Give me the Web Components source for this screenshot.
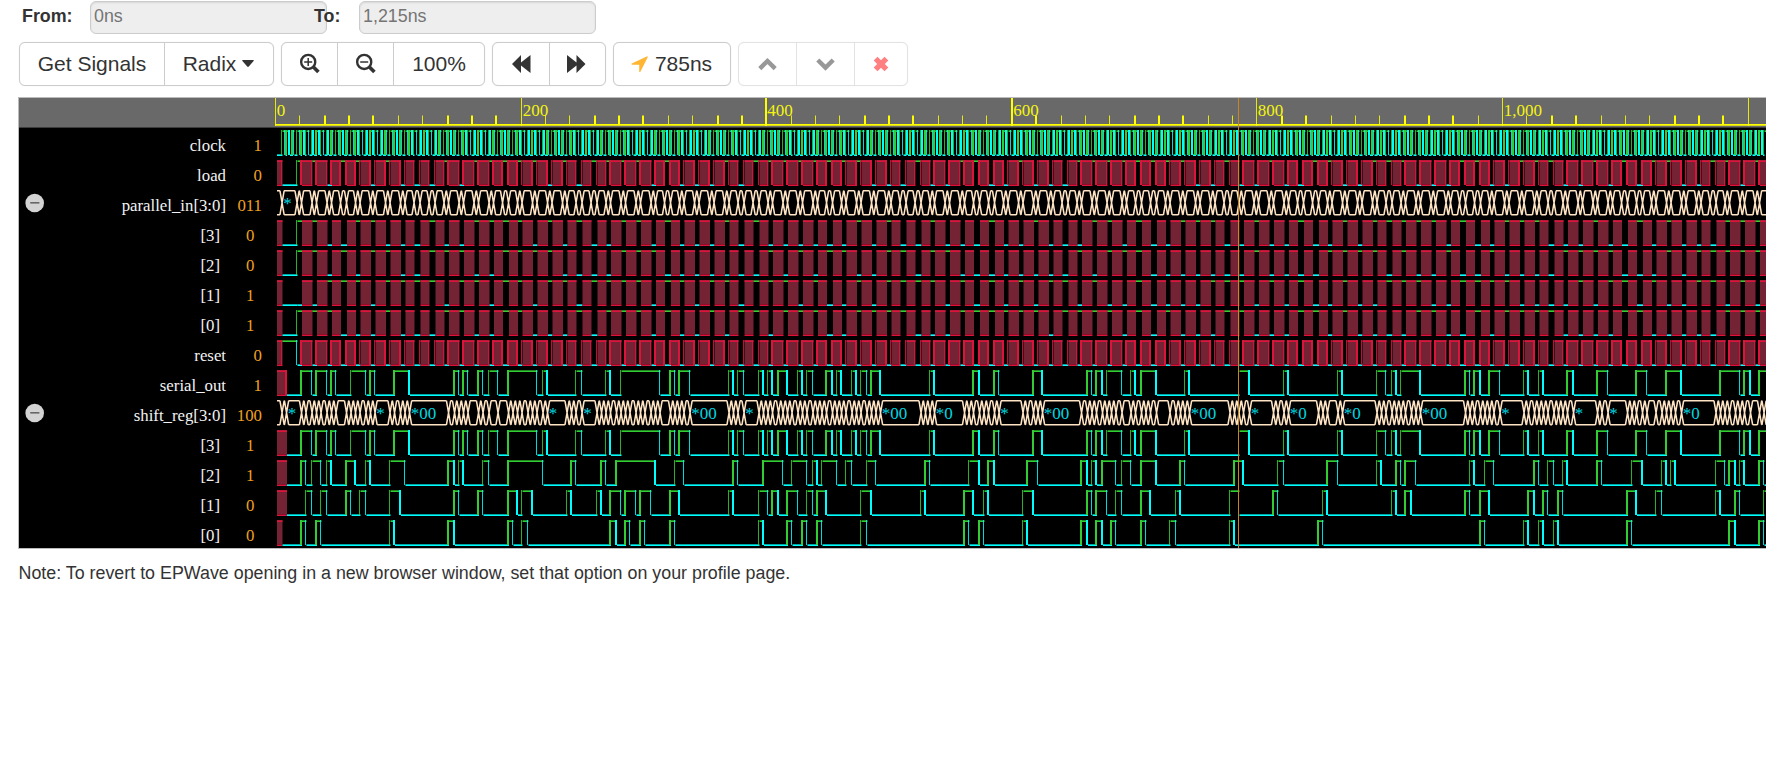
<!DOCTYPE html>
<html lang="en">
<head>
<meta charset="utf-8">
<title>EPWave</title>
<style>
body { margin: 0; background: #fff; font-family: "Liberation Sans", Arial, sans-serif; color: #333; overflow: hidden; }
</style>
</head>
<body>
<ep-wave></ep-wave>
<script>
const define = (name, html, init) => customElements.define(name, class extends HTMLElement {
  connectedCallback() {
    if (this.shadowRoot) return;
    const t = document.createElement('template');
    t.innerHTML = html;
    this.attachShadow({ mode: 'open' }).append(t.content.cloneNode(true));
    if (init) init(this, this.shadowRoot);
  }
});

/* ---------- time base: whole wave units, 1.5 px each ---------- */
const UNIT = 1.5, PER_NS = 0.8181, END = 1230, PLOT = 1491;
const unit = t => Math.round(t * PER_NS);
const px = t => unit(t) * UNIT;
const HI = 2, LO = 26;
const GREEN = '#32cd32', CYAN = '#00ffff', RED = '#dc143c', BUS = '#ffe4c4';

/* ---------- recorded data ---------- */
/* shift register edges: [segment origin, thirds of a pixel...] */
const edges = segs => segs.flatMap(([o, ...zs]) => zs.map(z => 1 + 4 * Math.round((o + z / 3 - 276.73) / 4.908)));
const S3 = edges([
  [270,92,124,137,170,182,196,241,286,299,313,372,416,552,566,579,593,623,637,655,683,713,800,817,830,917,935],
  [580,77,90,121,239,269,284,296,328,446,459,472,490,536,549,562,575,593,621,653,666,680,698,738,756,769,783,813,828,842,860,872,901],
  [890,118,132,253,266,311,326,428,457,590,605,617,635,649,695,722,736,752,798,883,897],
  [1200,116,147,250,264,412,426,530,557,574,588,601,661,794,809,821,840,866,899],
  [1480,130,144,175,189,260,279,350,382,468,500,557,604,718,778,790,809,836]]);
const S2 = edges([
  [270,92,106,124,152,169,182,227,256,286,299,358,404,534,552,565,578,637,655,713,818,902,917],
  [580,62,76,107,225,283,310,459,472,548,608,634,680,698,711,724,770,797,815,860,886],
  [890,104,118,235,267,293,312,415,442,577,590,604,617,635,676,694,722,752,798,870,883],
  [1200,101,129,232,250,380,413,530,543,587,602,614,647,808,822,853,880],
  [1480,161,175,202,220,247,260,350,364,455,486,545,558,571,584,706,733,746,764,778,792,836,850]]);
const S1 = edges([
  [270,106,124,152,169,227,241,268,286,358,389,552,566,623,637,713,740,754,786,889,902],
  [580,49,62,90,121,134,166,179,211,269,297,446,459,536,562,575,593,620,653,680,698,710,738,842,873],
  [890,91,104,221,254,280,294,397,429,590,605,617,649,676,694,752,780,857,870],
  [1200,88,116,218,232,367,380,574,588,614,633,794,809,840,867],
  [1480,143,161,188,202,234,247,440,467,526,544,706,720,764,778,850]]);
const S0 = edges([
  [270,92,106,137,152,358,372,534,552,713,727,754,772],
  [580,90,108,134,148,179,193,269,283,536,549,620,634,665,679,710,725,842,858],
  [890,221,235,267,280,397,415,577,590,617,635,662,676,752,766,838,856],
  [1200,88,102,353,367,839,854],
  [1480,130,144,175,189,220,234,440,454,746,764,836,850]]);

/* state of the register [3..0] at a time, and the load strobes that explain it */
const stateAt = t => [S3, S2, S1, S0].map(list => list.filter(e => e <= t).length % 2);
const loadedAt = k => {
  const now = stateAt(34 + 12 * k), [, b, c, d] = stateAt(30 + 12 * k);
  return String(now) !== String([b, c, d, 0]) ? now : null;
};
const TAIL = 65;
const tail = (row, head, idle) => [...head + idle].map((bit, k) => {
  if (k < TAIL) return bit;
  const s = loadedAt(k);
  return row < 0 ? (s ? 1 : 0) : s ? s[row] : bit;
});

const toggles = (xEnd, list) => [[0, 'x'], [xEnd, 0], ...list.map((t, i) => [t, i % 2 ? 0 : 1])];
const sampled = (first, bits) => {
  const out = [[0, 'x'], [5, first[0]], [17, first[1]]];
  for (let k = 0; 21 + 12 * k < END; k++) out.push([21 + 12 * k, 'x'], [29 + 12 * k, +(bits[k] || 0)]);
  return out;
};
const clock = [[0, 0]];
for (let t = 5; t < END; t += 4) clock.push([t, 1], [t + 2, 0]);
const sampleTimes = [5, 17];
for (let t = 21; t < END; t += 12) sampleTimes.push(t, t + 8);

const SIGNALS = [
  { name: 'clock', value: '1', wave: clock },
  { name: 'load', value: '0', frame: 1, wave: sampled([0, 1], tail(-1, '10110100010111110101111010001011111111000100110010001111111100100', '0'.repeat(36))) },
  { name: 'parallel_in[3:0]', value: '011', bus: sampleTimes },
  { name: '[3]', value: '0', child: 1, wave: sampled([0, 1], tail(0, '10011000100111101010011010001010000001010010001001000110100111001', '001101001011010011010010110100101011')) },
  { name: '[2]', value: '0', child: 1, wave: sampled([0, 1], tail(1, '10101100111001111000011100000001010110011011000000001011100000001', '100101101000110100101101001101001010')) },
  { name: '[1]', value: '1', child: 1, wave: sampled([0, 0], tail(2, '01110111101101101101111011011011101001011110101010110100100001110', '101001011010010110100101101001011010')) },
  { name: '[0]', value: '1', child: 1, wave: sampled([0, 1], tail(3, '11000100011001100010111010010110111001111000111111011110101000110', '101101001011010011010010110100101100')) },
  { name: 'reset', value: '0', frame: 1, wave: sampled([1, 0], '') },
  { name: 'serial_out', value: '1', frame: 1, wave: toggles(9, S3) },
  { name: 'shift_reg[3:0]', value: '100', bus: [...new Set([5, 9, ...S3, ...S2, ...S1, ...S0])].sort((a, b) => a - b) },
  { name: '[3]', value: '1', child: 1, wave: toggles(9, S3) },
  { name: '[2]', value: '1', child: 1, wave: toggles(9, S2) },
  { name: '[1]', value: '0', child: 1, wave: toggles(9, S1) },
  { name: '[0]', value: '0', child: 1, wave: toggles(5, S0) }
];

/* ---------- drawing ---------- */
const rect = (x, y, w, h, c, o = 1) => `<rect x="${x}" y="${y}" width="${w}" height="${h}" fill="${c}"${o < 1 ? ` opacity="${o}"` : ''}/>`;
/* an even unit lands on one pixel, an odd one straddles two */
const vline = (n, y, h, c) => n % 2 ? rect(n * UNIT - .5, y, 2, h, c) : rect(n * UNIT, y, 1, h, c, .85);
const hline = (x, y, w, c) => rect(x, y, w, 1, c) + rect(x, y - 1, w, 1, c, .65);

function drawBits(wave, frame) {
  let h = '', v = '';
  wave.forEach(([t, val], i) => {
    const n = unit(t), next = wave[i + 1] ? unit(wave[i + 1][0]) : 1000;
    const x = i ? n * UNIT + 1.5 : 2, w = next * UNIT + 1.5 - x;
    if (val === 'x') {
      h += rect(x, HI, w, LO - HI, '#742335') + hline(x, HI + 1, w, RED) + hline(x, LO + 1, w, RED);
      if (i && frame) v += vline(n, HI, LO - HI + 1, RED);
    } else {
      h += hline(x, val ? HI + 1 : LO + 1, w, val ? GREEN : CYAN);
      const prev = i ? wave[i - 1][1] : val;
      if (prev === 'x') { if (frame) v += vline(n, HI, LO - HI + 1, RED); }
      else if (prev !== val) v += vline(n, HI, LO - HI + 1, val ? GREEN : CYAN);
    }
  });
  return h + v;
}
function drawBus(times) {
  const top = HI + .75, bot = LO + .75;
  let d = '', text = '', from = 2;
  [...times, END].forEach((t, i) => {
    const c = px(t) + .75, a = c - 1.8, b = c + 2.4;
    if (a > from) d += `M${from} ${top}H${a}M${from} ${bot}H${a}`;
    d += `M${a} ${top}L${b} ${bot}M${a} ${bot}L${b} ${top}`;
    from = b;
    const len = i + 1 < times.length ? unit(times[i + 1]) - unit(t) : 0;
    if (len >= 10) text += `<text x="${c + 1.5}" y="20.8">${len >= 25 ? '*00' : len >= 19 ? '*0' : '*'}</text>`;
  });
  return `<path d="${d}" fill="none" stroke="${BUS}" stroke-width="1.5"/>${text}`;
}

define('wave-trace', `<style>
  :host { display: block; height: 30px; overflow: hidden; }
  svg { display: block; }
  text { font: 17px "Liberation Serif", serif; fill: #00d8e0; }
</style><div></div>`, (el, root) => {
  const s = SIGNALS[el.getAttribute('index')];
  root.querySelector('div').innerHTML = `<svg width="${PLOT}" height="30">${s.bus ? drawBus(s.bus) : drawBits(s.wave, s.frame)}</svg>`;
});

define('signal-row', `<style>
  :host { display: grid; grid-template-columns: 38px 169px 36px 13px 1fr; height: 30px; align-items: center; font: 16.8px/30px "Liberation Serif", serif; }
  .name { color: #f2f2f2; text-align: right; white-space: nowrap; padding-top: 6px; height: 24px; line-height: 24px; }
  .value { color: #f0a020; text-align: right; padding-top: 6px; height: 24px; line-height: 24px; }
  :host([child]) .name { padding-right: 6px; }
  :host([child]) .value { padding-right: 7.5px; }
  svg { display: block; margin: 0 0 1px 6px; }
</style>
<span class="fold"></span><span class="name"></span><span class="value"></span><span></span><div class="plot"></div>`, (el, root) => {
  const i = el.getAttribute('index'), s = SIGNALS[i];
  root.querySelector('.name').textContent = s.name;
  root.querySelector('.value').textContent = s.value;
  if (s.bus) root.querySelector('.fold').innerHTML = '<svg width="20" height="20"><circle cx="9.7" cy="10" r="9.3" fill="#d3d3d3"/><rect x="5.2" y="9" width="9.2" height="1.6" fill="#666"/></svg>';
  root.querySelector('.plot').innerHTML = `<wave-trace index="${i}"></wave-trace>`;
});

define('time-ruler', `<style>
  :host { display: block; height: 30px; background: #696969; box-sizing: border-box; border-bottom: 1px solid #3c3c3c; padding-left: 256px; }
  svg { display: block; }
  text { font: 17px "Liberation Serif", serif; fill: #f4f410; }
</style><div></div>`, (el, root) => {
  let s = '';
  for (let t = 0; t <= 1200; t += 20) {
    const major = t % 200 === 0;
    s += vline(unit(t), major ? 0 : 17.5, major ? 28 : 9, '#ff0');
    if (major && t < 1200) s += `<text x="${px(t) + 1.8}" y="18">${t.toLocaleString('en-US')}</text>`;
  }
  root.querySelector('div').innerHTML = `<svg width="${PLOT}" height="29">${s}${rect(0, 26, PLOT, 1, '#ff0')}${rect(0, 27, PLOT, 1, '#ff0', .75)}</svg>`;
});

define('wave-viewer', `<style>
  :host { display: block; position: relative; width: 1747px; background: #000; border: solid #bbb; border-width: 1px 0 1px 1px; height: 450px; overflow: hidden; }
  .cursor { position: absolute; left: 1219px; top: 0; bottom: 0; width: 1px; background: #c8861e; }
</style><time-ruler></time-ruler>
<div class="rows">${SIGNALS.map((s, i) => `<signal-row index="${i}"${s.child ? ' child' : ''}></signal-row>`).join('')}</div>
<div class="cursor"></div>`);

define('time-range', `<style>
  :host { display: flex; height: 34px; font-size: 17.85px; padding-left: 22px; }
  label { font-weight: bold; width: 68px; line-height: 33px; position: relative; }
  label.to { width: 45px; margin-left: -13px; }
  .field { box-sizing: border-box; width: 237px; height: 33px; margin-top: 1px; padding-left: 3px; line-height: 29px; color: #757575; background: #eee; border: 1px solid #ccc; border-radius: 6px; box-shadow: inset 0 1px 2px rgba(0,0,0,.1); }
</style>
<label>From:</label><div class="field">0ns</div><label class="to">To:</label><div class="field">1,215ns</div>`);

define('tool-button', `<style>
  :host { display: flex; align-items: center; justify-content: center; box-sizing: border-box; height: 100%; padding-bottom: 1px; border-left: 1px solid #ccc; white-space: nowrap; }
  :host(:first-child) { border-left: 0; }
</style><slot></slot>`);

define('button-group', `<style>
  :host { display: flex; box-sizing: border-box; height: 44px; border: 1px solid #ccc; border-radius: 6px; background: #fff; box-shadow: 0 0 1px #ddd; }
  :host([disabled]) { opacity: .55; }
</style><slot></slot>`);

define('tool-bar', `<style>
  :host { display: flex; gap: 7px; padding: 8px 0 0 19px; height: 55px; box-sizing: border-box; font-size: 21px; }
  svg { display: block; overflow: visible; }
  .glass { fill: none; stroke: #333; }
</style>
<button-group><tool-button style="width:144px">Get Signals</tool-button><tool-button style="width:109px">Radix<svg width="12" height="8" style="margin:0 1px 0 6px"><path d="M1 0H11Q12.5 0 11.6 1L6.8 6.6Q6 7.3 5.2 6.6L.4 1Q-.5 0 1 0Z" fill="#333"/></svg></tool-button></button-group>
<button-group><tool-button style="width:55px"><svg width="20" height="20"><path class="glass" d="M8.2 .9A6.8 6.8 0 1 1 8.2 15 6.8 6.8 0 1 1 8.2 .9Z" stroke-width="2.4"/><path class="glass" d="M13.2 12.8L18.4 18" stroke-width="3.6"/><path class="glass" d="M8.2 4V12M4.2 8H12.2" stroke-width="1.5"/></svg></tool-button><tool-button style="width:56px"><svg width="20" height="20"><path class="glass" d="M8.2 .9A6.8 6.8 0 1 1 8.2 15 6.8 6.8 0 1 1 8.2 .9Z" stroke-width="2.4"/><path class="glass" d="M13.2 12.8L18.4 18" stroke-width="3.6"/><path class="glass" d="M4.2 8H12.2" stroke-width="1.5"/></svg></tool-button><tool-button style="width:91px">100%</tool-button></button-group>
<button-group><tool-button style="width:56px"><svg width="19" height="18" style="margin:0 0 0 1px"><path d="M0 9L9 0V7.5L18.5 0V18L9 10.5V18Z" fill="#333"/></svg></tool-button><tool-button style="width:56px"><svg width="19" height="18" style="margin:0 3px 0 0"><path d="M18.5 9L9.5 0V7.5L0 0V18L9.5 10.5V18Z" fill="#333"/></svg></tool-button></button-group>
<button-group><tool-button style="width:116px"><svg width="17" height="17" style="margin:1px 7px 0 0"><path d="M16.2 .3Q17 .3 16.6 1.4L9.4 15.8Q8.3 16.6 8.2 15.4V8.8H1.2Q-.4 8.2 .8 7.6Z" fill="#ffb733"/></svg><span style="margin-right:1px">785ns</span></tool-button></button-group>
<button-group disabled><tool-button style="width:57px"><svg width="19" height="14"><path d="M1.8 11.6L9.5 4L17.2 11.6" fill="none" stroke="#444" stroke-width="4.4"/></svg></tool-button><tool-button style="width:58px"><svg width="19" height="14" style="margin-top:1px"><path d="M1.8 3L9.5 10.6L17.2 3" fill="none" stroke="#444" stroke-width="4.4"/></svg></tool-button><tool-button style="width:53px"><svg width="14" height="14" style="margin:1px 1px 0 0"><path d="M1.6 1.6L12.4 12.4M12.4 1.6L1.6 12.4" fill="none" stroke="#ff1a1a" stroke-width="5.4"/></svg></tool-button></button-group>`);

define('ep-wave', `<style>
  :host { display: block; height: 766px; overflow: hidden; }
  wave-viewer { margin: 8px 0 0 18px; }
  p { margin: 13px 0 0 18.5px; font-size: 17.85px; line-height: 22px; }
</style>
<time-range></time-range><tool-bar></tool-bar><wave-viewer></wave-viewer>
<p>Note: To revert to EPWave opening in a new browser window, set that option on your profile page.</p>`);
</script>
</body>
</html>
